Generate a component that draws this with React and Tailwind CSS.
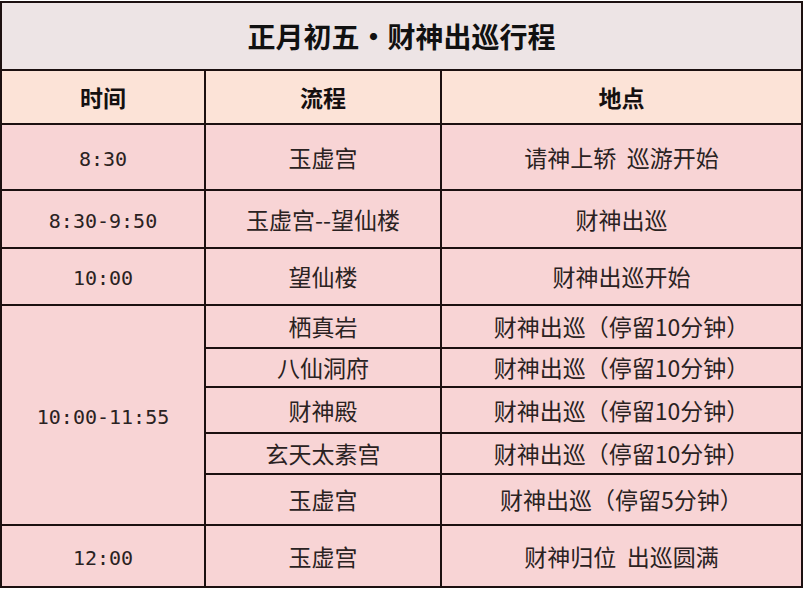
const rows = [
  { time: "8:30", place: "玉虚宫", note: "请神上轿\u00a0\u00a0巡游开始", h: "h-[64px]" },
  { time: "8:30-9:50", place: "玉虚宫--望仙楼", note: "财神出巡", h: "h-[56px]" },
  { time: "10:00", place: "望仙楼", note: "财神出巡开始", h: "h-[55px]" },
];

const stops = [
  { place: "栖真岩", note: "财神出巡（停留10分钟）", h: "h-[41px]" },
  { place: "八仙洞府", note: "财神出巡（停留10分钟）", h: "h-[37px]" },
  { place: "财神殿", note: "财神出巡（停留10分钟）", h: "h-[44px]" },
  { place: "玄天太素宫", note: "财神出巡（停留10分钟）", h: "h-[39px]" },
  { place: "玉虚宫", note: "财神出巡（停留5分钟）", h: "h-[49px]" },
];

const cjk = "font-['Noto_Sans_CJK_SC',sans-serif]";
const mono = "font-['DejaVu_Sans_Mono','Noto_Sans_CJK_SC',monospace]";

const Cell = ({ children, className = "" }) => (
  <div className={`flex items-center justify-center bg-[#f8d4d5] text-[#2a2222] ${className}`}>
    {children}
  </div>
);

const App = () => {
  return (
    <div className="w-[806px] h-[590px] bg-white pt-px">
      <div className="w-[803px] grid grid-cols-[202px_234px_359px] gap-[2px] p-[2px] bg-[#1c1010]">
        <div className={`col-span-3 h-[66px] flex items-center justify-center bg-[#ede4e5] text-[28px] font-semibold text-[#111] ${cjk}`}>
          正月初五•财神出巡行程
        </div>

        {["时间", "流程", "地点"].map((t) => (
          <div key={t} className={`h-[52px] flex items-center justify-center bg-[#fce3d7] text-[23px] font-bold text-[#151010] ${cjk}`}>
            {t}
          </div>
        ))}

        {rows.map((r) => (
          <div key={r.time} className="contents">
            <Cell className={`${r.h} ${mono} text-[20px] pt-[3px]`}>{r.time}</Cell>
            <Cell className={`${r.h} ${cjk} text-[23px]`}>{r.place}</Cell>
            <Cell className={`${r.h} ${cjk} text-[23px]`}>{r.note}</Cell>
          </div>
        ))}

        <Cell className={`row-span-5 ${mono} text-[20px] pt-[3px]`}>10:00-11:55</Cell>
        {stops.map((s, i) => (
          <div key={i} className="contents">
            <Cell className={`${s.h} ${cjk} text-[23px]`}>{s.place}</Cell>
            <Cell className={`${s.h} ${cjk} text-[23px]`}>{s.note}</Cell>
          </div>
        ))}

        <Cell className={`h-[60px] ${mono} text-[20px] pt-[3px]`}>12:00</Cell>
        <Cell className={`h-[60px] ${cjk} text-[23px]`}>玉虚宫</Cell>
        <Cell className={`h-[60px] ${cjk} text-[23px]`}>财神归位{"\u00a0\u00a0"}出巡圆满</Cell>
      </div>
    </div>
  );
};

export default App;
